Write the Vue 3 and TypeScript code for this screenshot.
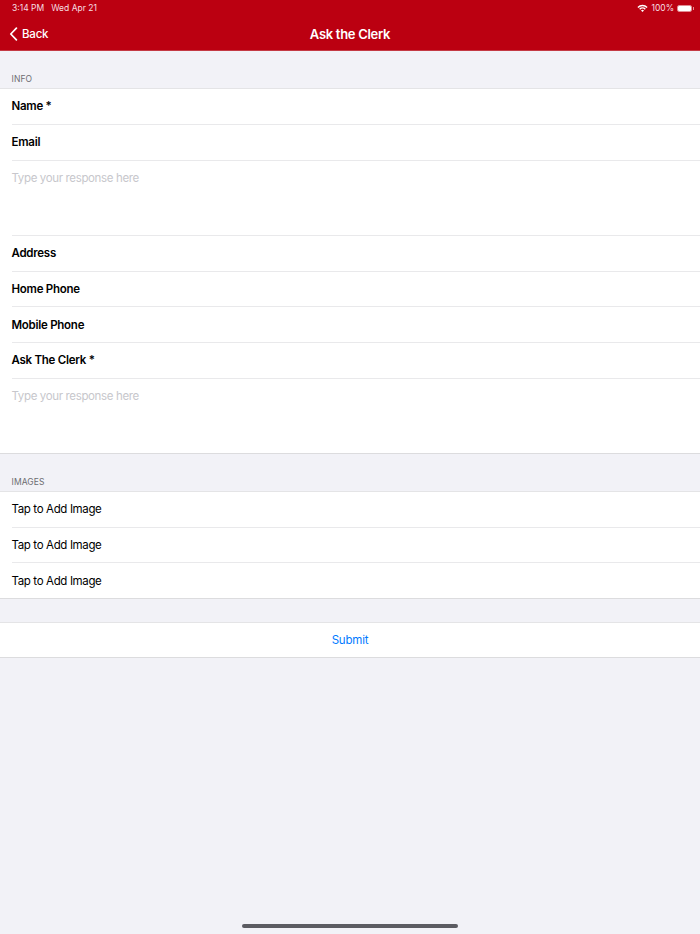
<script setup lang="ts">
const infoTop: string[] = ['Name *', 'Email']
const infoMid: string[] = ['Address', 'Home Phone', 'Mobile Phone', 'Ask The Clerk *']
const images: string[] = ['Tap to Add Image', 'Tap to Add Image', 'Tap to Add Image']
</script>

<template>
  <div class="page">
    <header class="nav">
      <div class="status">
        <div class="status-left"><span>3:14 PM</span><span>Wed Apr 21</span></div>
        <div class="status-right">
          <svg class="wifi" width="11" height="8" viewBox="0 0 11 8">
            <path d="M0.4 2.9A7.2 7.2 0 0 1 10.6 2.9L9.6 3.9A5.8 5.8 0 0 0 1.4 3.9Z" fill="#fff" />
            <path d="M2.2 4.7A4.7 4.7 0 0 1 8.8 4.7L7.8 5.7A3.3 3.3 0 0 0 3.2 5.7Z" fill="#fff" />
            <path d="M4 6.5A2.1 2.1 0 0 1 7 6.5L5.5 8Z" fill="#fff" />
          </svg>
          <span>100%</span>
          <span class="battery"><span class="battery-fill"></span></span>
          <span class="battery-tip"></span>
        </div>
      </div>
      <div class="bar">
        <div class="back">
          <svg width="9" height="14" viewBox="0 0 9 14">
            <path d="M7.4 1.2 1.8 7l5.6 5.8" fill="none" stroke="#fff" stroke-width="1.7" stroke-linecap="round" stroke-linejoin="round" />
          </svg>
          <span>Back</span>
        </div>
        <div class="title">Ask the Clerk</div>
      </div>
    </header>

    <div class="section-label info-label">INFO</div>
    <section class="group">
      <div v-for="item in infoTop" :key="item" class="row strong"><span>{{ item }}</span></div>
      <div class="row area short"><span>Type your response here</span></div>
      <div v-for="item in infoMid" :key="item" class="row strong"><span>{{ item }}</span></div>
      <div class="row area tall"><span>Type your response here</span></div>
    </section>

    <div class="section-label images-label">IMAGES</div>
    <section class="group images">
      <div v-for="(item, i) in images" :key="i" class="row"><span>{{ item }}</span></div>
    </section>

    <section class="group submit"><span>Submit</span></section>

    <div class="home-wrap"><div class="home"></div></div>
  </div>
</template>

<style>
html, body { margin: 0; background: #f2f2f7; }
</style>

<style scoped>
.page {
  width: 700px;
  height: 934px;
  background: #f2f2f7;
  font-family: Inter, "Liberation Sans", sans-serif;
  color: #000;
  overflow: hidden;
  display: flex;
  flex-direction: column;
  position: relative;
}
.nav {
  height: 51px;
  box-sizing: border-box;
  background: #bb0011;
  border-bottom: 1px solid #c43a44;
  color: #fff;
  flex: none;
}
.status {
  height: 16px;
  display: flex;
  justify-content: space-between;
  align-items: center;
  padding: 0 6px 0 12px;
  font-size: 8.5px;
  color: #f6dfe1;
}
.status-left { display: flex; gap: 7px; }
.status-right { display: flex; align-items: center; gap: 3px; }
.battery {
  width: 15px;
  height: 7px;
  box-sizing: border-box;
  border: 1px solid #e38a92;
  border-radius: 2px;
  display: block;
}
.battery-fill { display: block; height: 100%; background: #fff; border-radius: 1px; }
.battery-tip { width: 1px; height: 3px; background: #e38a92; margin-left: -2px; }
.bar {
  height: 34px;
  position: relative;
  display: flex;
  align-items: center;
  justify-content: center;
}
.back {
  position: absolute;
  left: 9px;
  top: 10px;
  display: flex;
  align-items: center;
  gap: 4px;
  font-size: 11.5px;
  font-weight: 500;
  line-height: 16px;
  letter-spacing: -0.2px;
}
.title { font-size: 13px; font-weight: 600; letter-spacing: -0.3px; padding-top: 1px; }
.section-label {
  font-size: 8.5px;
  color: #6d6d72;
  padding-left: 11.5px;
  box-sizing: border-box;
  line-height: 12px;
  letter-spacing: 0.1px;
  flex: none;
}
.info-label { height: 37px; padding-top: 22px; }
.images-label { height: 37px; padding-top: 22px; }
.group {
  background: #fff;
  border-top: 1px solid #e4e4e6;
  border-bottom: 1px solid #dcdcde;
  flex: none;
}
.row {
  height: 35.75px;
  box-sizing: border-box;
  margin-left: 11.5px;
  display: flex;
  align-items: center;
  font-size: 11.5px;
  line-height: 16px;
  letter-spacing: -0.36px;
  border-bottom: 1px solid #e9e9eb;
}
.images .row { height: 35.5px; }
.images .row:last-child { height: 35px; border-bottom: none; }
.strong { font-weight: 600; letter-spacing: -0.26px; }
.area {
  align-items: flex-start;
  padding-top: 9px;
  color: #c7c7cc;
  font-weight: 400;
  letter-spacing: -0.36px;
}
.short { height: 75.25px; }
.row.tall { height: 74.25px; border-bottom: none; }
.submit {
  margin-top: 23px;
  height: 36px;
  box-sizing: border-box;
  display: flex;
  align-items: center;
  justify-content: center;
  font-size: 11.5px;
  letter-spacing: -0.2px;
  color: #007aff;
}
.home-wrap {
  flex: 1;
  display: flex;
  align-items: flex-end;
  justify-content: center;
  padding-bottom: 6px;
}
.home { width: 216px; height: 4px; border-radius: 2px; background: #5c5c62; }
</style>
